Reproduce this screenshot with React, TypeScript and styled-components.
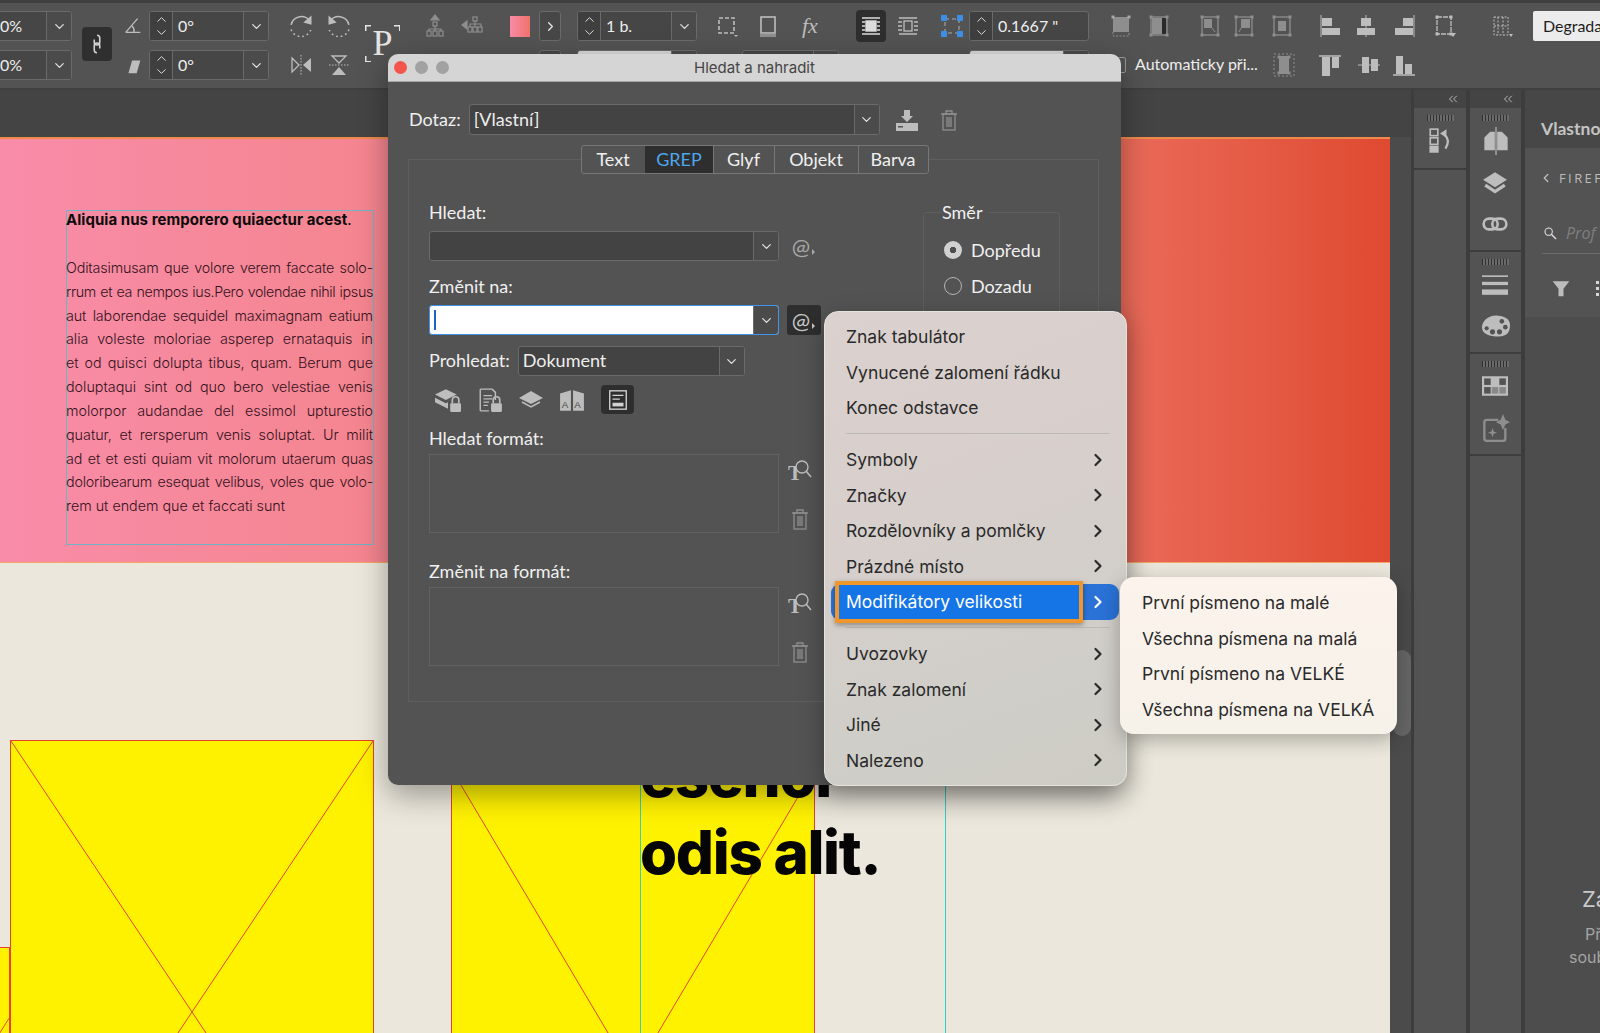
import React from "react"
import styled, { createGlobalStyle } from "styled-components"
import { ChevronDown, ChevronLeft, ChevronRight, ChevronUp, ChevronsLeft } from "lucide-react"

const ui = `"Lato", "Open Sans", sans-serif`
const mac = `"Inter", "Liberation Sans", sans-serif`

const GlobalStyle = createGlobalStyle`
    html, body { margin: 0; padding: 0; background: #4d4d4d; }
    * { box-sizing: border-box; }
    #root { width: 1600px; height: 1033px; }
`

const Screen = styled.div`
    position: relative;
    width: 1600px;
    height: 1033px;
    overflow: hidden;
    display: flex;
    flex-direction: column;
    font-family: ${ui};
    color: #e6e6e6;
`

/* top control bar */
const Toolbar = styled.div`
    flex: 0 0 90px;
    display: flex;
    align-items: flex-start;
    margin-left: -30px;
    width: 1630px;
    padding-top: 8px;
    background: #535353;
    border-top: 3px solid #3f3f3f;
    border-bottom: 2px solid #404040;
    font-size: 16px;
    overflow: hidden;
`
const Group = styled.div<{ $ml?: number }>`
    flex: none;
    margin-left: ${p => p.$ml ?? 0}px;
    display: flex;
    flex-direction: column;
    gap: 9px;
`
const ToolRow = styled.div<{ $gap?: number }>`
    display: flex;
    align-items: center;
    height: 30px;
    gap: ${p => p.$gap ?? 0}px;
`
const Slot = styled.div<{ $ml: number }>`
    flex: none;
    margin-left: ${p => p.$ml}px;
`
const Field = styled.div<{ $w: number; $h?: number; $ml?: number }>`
    flex: none;
    width: ${p => p.$w}px;
    height: ${p => p.$h ?? 30}px;
    margin-left: ${p => p.$ml ?? 0}px;
    display: flex;
    background: #464646;
    border: 1px solid #6a6a6a;
    border-radius: 3px;
    overflow: hidden;
`
const Stepper = styled.div`
    flex: 0 0 23px;
    display: flex;
    flex-direction: column;
    align-items: center;
    justify-content: center;
    background: #3f3f3f;
    border-right: 1px solid #6a6a6a;
    color: #dcdcdc;
    svg { margin: -1px 0; }
`
const FieldText = styled.div<{ $light?: boolean; $pad?: number }>`
    flex: 1;
    display: flex;
    align-items: center;
    padding: 0 0 2px ${p => p.$pad ?? 5}px;
    white-space: nowrap;
    background: ${p => (p.$light ? "#d8d8d8" : "transparent")};
    color: #eeeeee;
`
const Drop = styled.div<{ $w?: number }>`
    flex: 0 0 ${p => p.$w ?? 25}px;
    display: flex;
    align-items: center;
    justify-content: center;
    background: #4b4b4b;
    border-left: 1px solid #6a6a6a;
    color: #e2e2e2;
`
const LinkButton = styled.div`
    flex: 0 0 30px;
    height: 34px;
    margin: 16px 0 0 10px;
    display: flex;
    align-items: center;
    justify-content: center;
    background: #2f2f2f;
    border-radius: 4px;
`
const PFrame = styled.div`
    flex: 0 0 35px;
    height: 37px;
    margin: 14px 0 0 12px;
    font-family: "Liberation Serif", serif;
    font-size: 36px;
    line-height: 37px;
    text-align: center;
    color: #e4e4e4;
    background:
        linear-gradient(#e4e4e4, #e4e4e4) 0 0 / 6px 1.5px no-repeat,
        linear-gradient(#e4e4e4, #e4e4e4) 0 0 / 1.5px 6px no-repeat,
        linear-gradient(#e4e4e4, #e4e4e4) 100% 0 / 6px 1.5px no-repeat,
        linear-gradient(#e4e4e4, #e4e4e4) 100% 0 / 1.5px 6px no-repeat,
        linear-gradient(#e4e4e4, #e4e4e4) 0 100% / 6px 1.5px no-repeat,
        linear-gradient(#e4e4e4, #e4e4e4) 0 100% / 1.5px 6px no-repeat;
`
const Swatch = styled.div`
    flex: 0 0 20px;
    height: 21px;
    background: linear-gradient(90deg, #f78ca8, #f0726a);
`
const SquareButton = styled.div`
    flex: 0 0 22px;
    width: 22px;
    height: 30px;
    display: flex;
    align-items: center;
    justify-content: center;
    background: #474747;
    border: 1px solid #6a6a6a;
    border-radius: 3px;
    color: #e6e6e6;
`
const DarkTile = styled.div<{ $w?: number; $h?: number }>`
    flex: 0 0 ${p => p.$w ?? 30}px;
    width: ${p => p.$w ?? 30}px;
    height: ${p => p.$h ?? 32}px;
    display: flex;
    align-items: center;
    justify-content: center;
    background: #2e2e2e;
    border-radius: 4px;
`
const Check = styled.div`
    flex: 0 0 13px;
    height: 16px;
    margin-left: 4px;
    border: 1px solid #9a9a9a;
    border-radius: 2px;
`
const AutoLabel = styled.div`
    flex: 0 0 120px;
    margin: 0 14px 0 9px;
    padding-bottom: 3px;
    font-size: 16px;
    white-space: nowrap;
    color: #eeeeee;
`
const FxMark = styled.span`
    flex: 0 0 24px;
    display: block;
    padding-left: 5px;
    font-family: "Liberation Serif", serif;
    font-style: italic;
    font-size: 22px;
    line-height: 24px;
    color: #bdbdbd;
    white-space: nowrap;
`
const Degrade = styled.div`
    flex: 0 0 120px;
    height: 30px;
    margin-left: 20px;
    padding: 0 0 2px 10px;
    display: flex;
    align-items: center;
    background: #ececec;
    border-radius: 2px;
    color: #1e1e1e;
    white-space: nowrap;
`

/* icons */
const Svg = styled.svg<{ $size?: number }>`
    flex: 0 0 ${p => p.$size ?? 24}px;
    width: ${p => p.$size ?? 24}px;
    height: ${p => p.$size ?? 24}px;
    display: block;
`
const c = "#bdbdbd"
const m = "#8e8e8e"
const handles = (col: string, pts: number[][]) =>
    pts.map(([x, y], i) => <rect key={i} x={x - 1.5} y={y - 1.5} width="3" height="3" fill={col} />)

const shapes: Record<string, React.ReactNode> = {
    angle: <path d="M4 19 L17 4 M4 19 H20 M11 12 Q14 15 13 19" stroke={c} strokeWidth="1.4" fill="none" />,
    shear: <polygon points="7,21 11,7 20,7 16,21" fill={c} />,
    rotCw: <g fill="none" stroke={c} strokeWidth="1.3"><path d="M19 7 A9 9 0 0 0 3.5 11" /><path d="M3.5 15 A9 9 0 0 0 20.5 15" strokeDasharray="1.5 2.5" /><polygon points="21,3 21,11 14,9" fill={c} stroke="none" /></g>,
    rotCcw: <g fill="none" stroke={c} strokeWidth="1.3"><path d="M5 7 A9 9 0 0 1 20.5 11" /><path d="M20.5 15 A9 9 0 0 1 3.5 15" strokeDasharray="1.5 2.5" /><polygon points="3,3 3,11 10,9" fill={c} stroke="none" /></g>,
    flipH: <g><polygon points="3,5 10,12 3,19" fill="none" stroke={c} strokeWidth="1.3" /><polygon points="22,5 14,12 22,19" fill={c} /><path d="M12 2 V22" stroke={c} strokeDasharray="1.5 1.5" /></g>,
    flipV: <g><polygon points="5,3 19,3 12,10" fill="none" stroke={c} strokeWidth="1.3" /><polygon points="5,22 19,22 12,14" fill={c} /><path d="M2 12 H22" stroke={c} strokeDasharray="1.5 1.5" /></g>,
    orgUp: <g fill="none" stroke={m} strokeWidth="1.2"><polygon points="12,1 16,6 8,6" fill={m} /><rect x="10" y="8" width="4" height="4" /><path d="M12 12 V15 M6 17 V15 H18 V17 M12 15 V17" /><rect x="4" y="17" width="4" height="5" /><rect x="10" y="17" width="4" height="5" /><rect x="16" y="17" width="4" height="5" /></g>,
    orgLeft: <g fill="none" stroke={m} strokeWidth="1.2"><polygon points="1,11 6,7 6,15" fill={m} /><rect x="12" y="3" width="4" height="4" /><path d="M14 7 V10 M9 13 V10 H20 V13 M14 10 V13" /><rect x="7" y="13" width="4" height="5" /><rect x="12" y="13" width="4" height="5" /><rect x="17" y="13" width="4" height="5" /></g>,
    frame: <g><rect x="4" y="4" width="15" height="15" fill="none" stroke={c} strokeWidth="1.6" strokeDasharray="4 2" /><polygon points="19,21 23,21 21,23" fill={c} /></g>,
    shadow: <g><rect x="5" y="3" width="14" height="16" fill="none" stroke={c} strokeWidth="1.6" /><rect x="4" y="20" width="16" height="3" fill={m} /></g>,
    wrapOn: <g stroke="#dcdcdc" strokeWidth="1.4" fill="none"><path d="M3 4 H21 M3 20 H21 M3 8 H6 M18 8 H21 M3 12 H6 M18 12 H21 M3 16 H6 M18 16 H21" /><rect x="7" y="7" width="10" height="10" fill="#dcdcdc" /></g>,
    wrapOff: <g stroke={c} strokeWidth="1.3" fill="none"><path d="M3 4 H21 M3 20 H21 M2 8 H6 M18 8 H22 M2 12 H6 M18 12 H22 M2 16 H6 M18 16 H22" /><rect x="8" y="7" width="8" height="10" /></g>,
    handles: <g><path d="M5 5 H19 V19 H5 Z" fill="none" stroke={m} strokeWidth="1.6" strokeDasharray="4 3" />{[[4, 4], [20, 4], [4, 20], [20, 20]].map(([x, y], i) => <rect key={i} x={x - 3} y={y - 3} width="6" height="6" fill="#3d8fe6" />)}</g>,
    fitA: <g><rect x="4" y="3" width="16" height="15" fill="#8e8e8e" />{handles("#a8a8a8", [[4, 3], [20, 3]])}<path d="M4 18 V22 H20 V18" fill="none" stroke={m} strokeDasharray="2 1.5" /></g>,
    fitB: <g><rect x="4" y="3" width="16" height="18" fill="none" stroke={m} strokeWidth="1.3" /><rect x="5" y="4" width="10" height="16" fill="#8e8e8e" /><rect x="15" y="4" width="4" height="16" fill="#2a2a2a" />{handles(m, [[4, 3], [20, 3], [4, 21], [20, 21]])}</g>,
    fitC: <g><rect x="4" y="3" width="16" height="18" fill="none" stroke={m} strokeWidth="1.3" /><rect x="6" y="5" width="8" height="9" fill={m} /><path d="M14 14 L17 18" stroke={m} />{handles(m, [[4, 3], [20, 3], [4, 21], [20, 21]])}</g>,
    fitD: <g><rect x="4" y="3" width="16" height="18" fill="none" stroke={m} strokeWidth="1.3" /><rect x="9" y="5" width="9" height="9" fill={m} /><path d="M9 14 L7 18" stroke={m} />{handles(m, [[4, 3], [20, 3], [4, 21], [20, 21]])}</g>,
    fitE: <g><rect x="4" y="3" width="16" height="18" fill="none" stroke={m} strokeWidth="1.3" /><rect x="8" y="7" width="8" height="10" fill={m} />{handles(m, [[4, 3], [20, 3], [4, 21], [20, 21]])}</g>,
    fitDash: <g><rect x="2" y="1" width="20" height="22" fill="none" stroke={m} strokeDasharray="2 2" /><rect x="7" y="3" width="10" height="18" fill={m} />{handles(m, [[7, 4], [17, 4], [7, 20], [17, 20]])}</g>,
    alignL: <g fill={c}><path d="M3 1 V23" stroke={c} /><rect x="4" y="4" width="10" height="8" /><rect x="4" y="14" width="18" height="7" /></g>,
    alignC: <g fill={c}><path d="M12 1 V23" stroke={c} /><rect x="7" y="4" width="10" height="8" /><rect x="3" y="14" width="18" height="7" /></g>,
    alignR: <g fill={c}><path d="M21 1 V23" stroke={c} /><rect x="10" y="4" width="10" height="8" /><rect x="2" y="14" width="18" height="7" /></g>,
    alignTo: <g><rect x="5" y="3" width="14" height="17" fill="none" stroke={c} strokeWidth="1.3" strokeDasharray="5 1" /><polygon points="18,19 24,19 21,23" fill={c} />{handles(c, [[5, 3], [19, 3], [5, 20], [19, 20]])}</g>,
    grid: <g fill="none" stroke={c}><rect x="5" y="3" width="14" height="18" strokeDasharray="2 1.5" /><path d="M9 3 V21 M14 3 V21 M5 12 H19" strokeDasharray="2 1.5" /><polygon points="20,20 24,20 22,23" fill={c} stroke="none" /></g>,
    alignT: <g fill={c}><path d="M1 3 H23" stroke={c} strokeWidth="1.5" /><rect x="4" y="4" width="8" height="19" /><rect x="14" y="4" width="7" height="11" /></g>,
    alignM: <g fill={c}><path d="M1 12 H23" stroke={c} /><rect x="5" y="4" width="7" height="16" /><rect x="14" y="6" width="7" height="12" /></g>,
    alignB: <g fill={c}><path d="M1 22 H23" stroke={c} strokeWidth="1.5" /><rect x="4" y="3" width="7" height="18" /><rect x="13" y="11" width="7" height="10" /></g>,
    link: <g fill="none" stroke="#d4d4d4" strokeWidth="1.7"><path d="M12 2.5 a3 3 0 0 1 3 3 V10 a3 3 0 0 1 -6 0 V7" /><path d="M12 21.5 a3 3 0 0 1 -3 -3 V14 a3 3 0 0 1 6 0 V17" /></g>,
    import: <g fill={c}><polygon points="9,2 15,2 15,8 18,8 12,14 6,8 9,8" /><rect x="1" y="15" width="22" height="8" /><rect x="3" y="18" width="5" height="1.5" fill="#535353" /></g>,
    trash: <g fill="none" stroke={m} strokeWidth="1.3"><path d="M4 6 H20 M9 6 V3 H15 V6" /><rect x="6" y="6" width="12" height="16" /><path d="M10 9 V19 M12 9 V19 M14 9 V19" /></g>,
    typeSearch: <g><text x="0" y="21" fontFamily="Liberation Serif, serif" fontSize="21" fontWeight="700" fill={c}>T</text><circle cx="14" cy="8" r="6" fill="#535353" stroke={c} strokeWidth="1.4" /><path d="M18 12 L23 18" stroke={c} strokeWidth="1.6" /></g>,
    lockLayers: <g fill={c}><polygon points="10,2 20,7 10,12 0,7" /><polygon points="0,10 10,15 12,14 12,20 0,14" /><rect x="14" y="15" width="10" height="8" rx="1" /><path d="M16 15 V12 a3 3 0 0 1 6 0 V15" fill="none" stroke={c} strokeWidth="1.5" /></g>,
    lockDoc: <g><path d="M3 2 H14 L17 5 V12 M11 22 H3 Z M3 2 V22" fill="none" stroke={c} strokeWidth="1.3" /><path d="M6 8 H14 M6 11 H14 M6 14 H11 M6 17 H10" stroke={c} strokeWidth="1.3" /><rect x="13" y="15" width="10" height="8" rx="1" fill={c} /><path d="M15 15 V12 a3 3 0 0 1 6 0 V15" fill="none" stroke={c} strokeWidth="1.5" /></g>,
    layers: <g><polygon points="12,3 24,10 12,16 0,10" fill={c} /><path d="M3 14 L12 19 L21 14" fill="none" stroke={c} strokeWidth="1.5" /></g>,
    book: <g><path d="M1 6 L11 3 V22 L1 22 Z" fill={c} /><path d="M23 6 L13 3 V22 L23 22 Z" fill={c} /><text x="2.5" y="19" fontFamily="Liberation Sans, sans-serif" fontSize="9" fill="#484848">A</text><text x="14" y="19" fontFamily="Liberation Sans, sans-serif" fontSize="9" fill="#484848">A</text></g>,
    docActive: <g><rect x="3" y="2" width="18" height="20" fill="none" stroke="#d2d2d2" strokeWidth="1.5" /><path d="M6 7 H18 M6 11 H14" stroke="#d2d2d2" strokeWidth="1.5" /><rect x="6" y="15" width="12" height="4" fill="#d2d2d2" /></g>,
    history: <g fill="none" stroke={c} strokeWidth="1.5"><rect x="3" y="2" width="7" height="6" /><rect x="3" y="10" width="7" height="6" /><rect x="3" y="18" width="7" height="5" fill={c} /><path d="M17 20 Q22 12 16 7" strokeWidth="2" /><polygon points="12,6 18,2 18,10" fill={c} stroke="none" /></g>,
    pages: <g fill={c}><polygon points="2,9 7,4 11,4 11,20 2,20" /><polygon points="22,9 17,4 13,4 13,20 22,20" /><path d="M12 0 V24" stroke={c} /></g>,
    stack: <g fill={c}><polygon points="12,2 23,9 12,16 1,9" /><path d="M3 14 L12 20 L21 14" fill="none" stroke={c} strokeWidth="3" /></g>,
    chain: <g fill="none" stroke={c} strokeWidth="2.4"><rect x="1.5" y="7" width="13" height="10" rx="5" /><rect x="9.5" y="7" width="13" height="10" rx="5" /></g>,
    lines: <g fill={c}><rect x="0" y="4" width="24" height="1.5" /><rect x="0" y="10" width="24" height="3" /><rect x="0" y="17" width="24" height="5" /></g>,
    palette: <g><path d="M12 3 C5 3 0 8 0 13 C0 19 7 21 14 21 C22 21 24 17 24 11 C24 6 19 3 12 3 Z" fill={c} /><g fill="#535353"><circle cx="17" cy="8" r="2" /><circle cx="20" cy="13" r="2" /><circle cx="15" cy="17" r="2.2" /><circle cx="9" cy="17" r="2.2" /><circle cx="4" cy="14" r="1.8" /></g></g>,
    swatches: <g><rect x="0" y="3" width="24" height="18" fill={c} /><g fill="#535353"><rect x="2" y="5" width="6" height="6" /><rect x="16" y="5" width="6" height="6" /><rect x="2" y="13" width="6" height="6" /><rect x="9" y="13" width="6" height="6" fill="#888" /><rect x="16" y="13" width="6" height="6" fill="#888" /></g></g>,
    sparkle: <g><path d="M14 5 H4 a2 2 0 0 0 -2 2 V21 a2 2 0 0 0 2 2 H18 a2 2 0 0 0 2 -2 V12" fill="none" stroke={m} strokeWidth="2" /><polygon points="18,0 20,5 24,7 20,9 18,14 16,9 12,7 16,5" fill={m} /><polygon points="9,12 10,15 13,16 10,17 9,20 8,17 5,16 8,15" fill={m} /></g>,
    search: <g fill="none" stroke="#e2e2e2" strokeWidth="1.6"><circle cx="10" cy="10" r="5.5" /><path d="M14 14 L21 21" strokeWidth="2" /></g>,
    filter: <polygon points="2,4 22,4 15,13 15,22 9,22 9,13" fill={c} />,
}

const Icon: React.FC<{ name: string; size?: number }> = ({ name, size }) => (
    <Svg $size={size} viewBox="0 0 24 24">{shapes[name]}</Svg>
)

/* canvas */
const Workspace = styled.div`
    flex: 1;
    display: flex;
    min-height: 0;
`
const Canvas = styled.div`
    flex: 0 0 1411px;
    display: flex;
    flex-direction: column;
    background: #4b4b4b;
`
const CanvasStrip = styled.div`
    flex: 0 0 47px;
    background: #444444;
`
const CanvasRow = styled.div`
    flex: 1;
    display: flex;
`
const Page = styled.div`
    position: relative;
    flex: 0 0 1390px;
    background: #ebe7dc;
    border-top: 2px solid #ef8a4a;
    overflow: hidden;
`
const Banner = styled.div`
    height: 424px;
    background: linear-gradient(90deg, #f98ca9 0%, #f4858f 27%, #ea6c5b 80%, #df4a30 100%);
    border-bottom: 1px solid #f4a862;
`
const TextFrame = styled.div`
    position: absolute;
    left: 66px;
    top: 71px;
    width: 308px;
    height: 335px;
    border: 1px solid #6fb3c4;
    font-family: "Inter", sans-serif;
    font-weight: 300;
    font-size: 14.3px;
    line-height: 23.85px;
    color: #35121c;
`
const FrameTitle = styled.div`
    margin: -3px 0 24px -1px;
    font-weight: 700;
    font-size: 15px;
    letter-spacing: 0.05px;
    color: #0d0a0b;
    white-space: nowrap;
`
const TitleDot = styled.span`
    font-weight: 400;
`
const Line = styled.div<{ $last?: boolean; $ls?: number }>`
    width: 307px;
    margin-left: -1px;
    white-space: nowrap;
    text-align: justify;
    text-align-last: ${p => (p.$last ? "left" : "justify")};
    letter-spacing: ${p => p.$ls ?? 0}px;
`
const Placeholder = styled.div<{ $x: number; $y: number; $w: number; $h: number }>`
    position: absolute;
    left: ${p => p.$x}px;
    top: ${p => p.$y}px;
    width: ${p => p.$w}px;
    height: ${p => p.$h}px;
    background: #fff200;
    border: 1px solid #e6432a;
`
const Cross = styled.svg`
    display: block;
    width: 100%;
    height: 100%;
`
const Guide = styled.div<{ $x: number }>`
    position: absolute;
    left: ${p => p.$x}px;
    top: 606px;
    bottom: 0;
    width: 1px;
    background: #35cfc0;
`
const Headline = styled.div`
    position: absolute;
    left: 640px;
    top: 598px;
    font-family: "Inter", sans-serif;
    font-weight: 800;
    font-size: 60px;
    line-height: 77px;
    letter-spacing: -1.3px;
    color: #050505;
`
const ScrollGutter = styled.div`
    flex: 1;
    padding: 513px 0 0 3px;
`
const ScrollThumb = styled.div`
    width: 18px;
    height: 86px;
    background: #666666;
    border-radius: 9px;
`

/* right dock */
const Dock = styled.div`
    flex: 1;
    display: flex;
    background: #3d3d3d;
    padding-left: 3px;
    gap: 4px;
`
const DockColumn = styled.div<{ $w: number }>`
    flex: 0 0 ${p => p.$w}px;
    display: flex;
    flex-direction: column;
    background: #535353;
`
const Collapse = styled.div`
    flex: 0 0 18px;
    display: flex;
    align-items: center;
    justify-content: flex-end;
    padding-right: 6px;
    background: #444444;
    color: #c8c8c8;
`
const DockGroup = styled.div<{ $h: number }>`
    flex: 0 0 ${p => p.$h}px;
    display: flex;
    flex-direction: column;
    align-items: center;
    padding-top: 7px;
    background: #535353;
    border-bottom: 2px solid #3d3d3d;
`
const Gripper = styled.div`
    flex: 0 0 6px;
    width: 27px;
    margin-bottom: 6px;
    background: repeating-linear-gradient(90deg, #2f2f2f 0 1px, #6a6a6a 1px 3px);
`
const DockIcons = styled.div`
    display: flex;
    flex-direction: column;
    gap: 15px;
`
const PropsPanel = styled.div`
    flex: 1;
    display: flex;
    flex-direction: column;
    background: #4d4d4d;
    overflow: hidden;
    min-width: 0;
`
const PanelHead = styled.div`
    flex: 0 0 58px;
    padding: 18px 0 0 16px;
    display: flex;
    align-items: center;
    background: #474747;
    font-size: 17.5px;
    font-weight: 700;
    color: #c4c4c4;
    white-space: nowrap;
`
const PanelSection = styled.div`
    flex: 0 0 169px;
    display: flex;
    flex-direction: column;
    padding: 21px 0 0 14px;
    background: #535353;
`
const CrumbRow = styled.div`
    display: flex;
    align-items: center;
    gap: 6px;
    font-family: "Open Sans", sans-serif;
    font-size: 13px;
    letter-spacing: 2.4px;
    color: #bdbdbd;
    white-space: nowrap;
`
const SearchRow = styled.div`
    display: flex;
    align-items: center;
    gap: 8px;
    margin: 35px 0 0 3px;
    padding-bottom: 9px;
    font-family: "Open Sans", sans-serif;
    font-style: italic;
    font-size: 16px;
    color: #7f7f7f;
`
const PanelRule = styled.div`
    height: 1px;
    margin-left: 3px;
    background: #6c6c6c;
`
const FilterRow = styled.div`
    display: flex;
    align-items: center;
    margin: 24px 0 0 12px;
    gap: 25px;
`
const DotsV = styled.div`
    flex: 0 0 3px;
    height: 15px;
    background: repeating-linear-gradient(#d8d8d8 0 3px, transparent 3px 6px);
`
const EmptyState = styled.div`
    flex: 1;
    padding-top: 569px;
    font-family: "Inter", sans-serif;
    white-space: nowrap;
`
const EmptyHead = styled.div`
    margin: 0 0 11px 57px;
    font-size: 22px;
    line-height: 26px;
    color: #c9c9c9;
`
const EmptyLine = styled.div<{ $ml: number }>`
    margin-left: ${p => p.$ml}px;
    font-size: 16px;
    line-height: 23px;
    color: #a4a4a4;
`

/* find/replace dialog */
const Dialog = styled.div`
    position: absolute;
    left: 388px;
    top: 54px;
    width: 733px;
    height: 731px;
    display: flex;
    flex-direction: column;
    background: #535353;
    border-radius: 10px;
    box-shadow: 0 10px 30px rgba(0, 0, 0, 0.35);
    font-size: 18px;
`
const TitleBar = styled.div`
    position: relative;
    flex: 0 0 28px;
    display: flex;
    align-items: center;
    justify-content: center;
    background: #d5d5d5;
    border-radius: 10px 10px 0 0;
    border-bottom: 1px solid #a6a6a6;
    font-family: ${mac};
    font-size: 15px;
    color: #454545;
`
const Lights = styled.div`
    position: absolute;
    left: 6px;
    top: 7px;
    display: flex;
    gap: 8px;
`
const Light = styled.span<{ $c: string }>`
    width: 13px;
    height: 13px;
    border-radius: 50%;
    background: ${p => p.$c};
`
const QueryRow = styled.div`
    display: flex;
    align-items: center;
    height: 31px;
    margin: 22px 0 0 21px;
`
const DLabel = styled.div<{ $top?: number }>`
    height: 20px;
    line-height: 19px;
    margin-top: ${p => p.$top ?? 0}px;
    color: #f0f0f0;
    white-space: nowrap;
`
const Tabs = styled.div`
    position: relative;
    z-index: 1;
    align-self: center;
    display: flex;
    height: 29px;
    margin-top: 10px;
    background: #535353;
    border: 1px solid #777777;
    border-radius: 3px;
`
const Tab = styled.div<{ $w: number; $active?: boolean }>`
    flex: 0 0 ${p => p.$w}px;
    display: flex;
    align-items: center;
    justify-content: center;
    padding-bottom: 2px;
    border-left: 1px solid ${p => (p.$active ? "#2e2e2e" : "#777777")};
    background: ${p => (p.$active ? "#2e2e2e" : "transparent")};
    color: ${p => (p.$active ? "#4ea6ea" : "#f0f0f0")};
    &:first-child { border-left: none; }
`
const Panel = styled.div`
    display: flex;
    width: 691px;
    height: 543px;
    margin: -15px 0 0 20px;
    padding-left: 20px;
    border: 1px solid #5e5e5e;
`
const LeftColumn = styled.div`
    flex: 0 0 393px;
    padding-top: 43px;
`
const FieldRow = styled.div<{ $top: number }>`
    display: flex;
    align-items: center;
    margin-top: ${p => p.$top}px;
`
const DialogField = styled(Field)<{ $focus?: boolean }>`
    background: ${p => (p.$focus ? "#ffffff" : "#434343")};
    border-color: ${p => (p.$focus ? "#3f93e8" : "#6a6a6a")};
`
const Caret = styled.span`
    width: 2px;
    height: 20px;
    align-self: center;
    margin-left: 4px;
    background: #1c64c8;
`
const AtButton = styled.div<{ $on?: boolean }>`
    position: relative;
    flex: 0 0 34px;
    height: 30px;
    margin-left: 8px;
    display: flex;
    align-items: center;
    justify-content: center;
    padding-right: 6px;
    border-radius: 3px;
    font-size: 22px;
    background: ${p => (p.$on ? "#2e2e2e" : "transparent")};
    color: ${p => (p.$on ? "#c8c8c8" : "#a8a8a8")};
    &::after {
        content: "";
        position: absolute;
        right: 6px;
        bottom: 6px;
        border-left: 3px solid currentColor;
        border-top: 3px solid transparent;
        border-bottom: 3px solid transparent;
    }
`
const ScopeIcons = styled.div`
    display: flex;
    align-items: center;
    height: 29px;
    margin-top: 9px;
    padding-left: 6px;
    gap: 16px;
`
const FormatRow = styled.div`
    display: flex;
    margin-top: 5px;
`
const FormatBox = styled.div`
    flex: 0 0 350px;
    height: 79px;
    border: 1px solid #626262;
`
const FormatTools = styled.div`
    margin-left: 9px;
    padding-top: 5px;
    display: flex;
    flex-direction: column;
    gap: 24px;
`
const Direction = styled.div`
    flex: 0 0 137px;
    height: 125px;
    margin: 52px 0 0 101px;
    padding-left: 18px;
    border: 1px solid #5e5e5e;
    border-radius: 3px;
`
const Legend = styled.div`
    width: fit-content;
    margin-top: -10px;
    padding-right: 6px;
    height: 20px;
    line-height: 19px;
    background: #535353;
    color: #f0f0f0;
`
const RadioRow = styled.div<{ $top: number }>`
    display: flex;
    align-items: center;
    gap: 9px;
    height: 20px;
    margin: ${p => p.$top}px 0 0 2px;
    color: #f0f0f0;
`
const Radio = styled.span<{ $on?: boolean }>`
    width: 18px;
    height: 18px;
    border-radius: 50%;
    ${p => (p.$on
        ? "background: radial-gradient(circle, #4d4d4d 0 3px, #d0d0d0 3.5px);"
        : "border: 1.5px solid #b4b4b4;")}
`

/* context menu */
const Menu = styled.div`
    position: absolute;
    left: 824px;
    top: 311px;
    width: 303px;
    height: 475px;
    padding-top: 7px;
    border-radius: 14px;
    background: linear-gradient(160deg, #dbd1cf 0%, #d7cfcc 40%, #d0cec9 75%, #cdccc4 100%);
    border: 1px solid #e6e3de;
    box-shadow: 0 8px 24px rgba(0, 0, 0, 0.3);
    font-family: ${mac};
    font-size: 17.5px;
    color: #2a2a2a;
`
const MenuItem = styled.div`
    height: 35.6px;
    display: flex;
    align-items: center;
    justify-content: space-between;
    padding: 0 18px 0 21px;
    white-space: nowrap;
`
const MenuSep = styled.div<{ $top: number }>`
    height: 1px;
    margin: ${p => p.$top}px 16px 8px 21px;
    background: #bdb9b5;
`
const ActiveItem = styled(MenuItem)`
    margin: 0 7px 0 6px;
    padding: 0 11px 0 0;
    border-radius: 9px;
    background: #2a72d6;
    color: #ffffff;
`
const Callout = styled.div`
    flex: 0 0 248px;
    height: 42px;
    margin: -3px 0 -3px 4px;
    padding-left: 7px;
    display: flex;
    align-items: center;
    background: #1574e6;
    border: 4px solid #f0962a;
    box-shadow: 0 2px 5px rgba(0, 0, 0, 0.35);
`
const SubMenu = styled.div`
    position: absolute;
    left: 1120px;
    top: 577px;
    width: 277px;
    height: 157px;
    padding: 8px 0;
    border-radius: 14px;
    background: linear-gradient(180deg, #fbf3ec, #f6f1e9);
    box-shadow: 0 6px 20px rgba(0, 0, 0, 0.28);
    font-family: ${mac};
    font-size: 17.5px;
    color: #2a2a2a;
`
const SubItem = styled(MenuItem)`
    padding-left: 22px;
`

const bodyLines: { text: string; ls?: number }[] = [
    { text: "Oditasimusam que volore verem faccate solo-", ls: -0.15 },
    { text: "rrum et ea nempos ius.Pero volendae nihil ipsus", ls: -0.35 },
    { text: "aut laborendae sequidel maximagnam eatium", ls: -0.1 },
    { text: "alia voleste moloriae asperep ernataquis in" },
    { text: "et od quisci dolupta tibus, quam. Berum que" },
    { text: "doluptaqui sint od quo bero velestiae venis" },
    { text: "molorpor audandae del essimol upturestio" },
    { text: "quatur, et rersperum venis soluptat. Ur milit" },
    { text: "ad et et esti quiam vit molorum utaerum quas", ls: -0.1 },
    { text: "doloribearum esequat velibus, voles que volo-", ls: -0.2 },
]
const menuTop = ["Znak tabulátor", "Vynucené zalomení řádku", "Konec odstavce"]
const menuMid = ["Symboly", "Značky", "Rozdělovníky a pomlčky", "Prázdné místo"]
const menuEnd = ["Uvozovky", "Znak zalomení", "Jiné", "Nalezeno"]
const subItems = ["První písmeno na malé", "Všechna písmena na malá", "První písmeno na VELKÉ", "Všechna písmena na VELKÁ"]

const Down = () => <ChevronDown size={15} strokeWidth={2} />
const Spin = () => (
    <Stepper>
        <ChevronUp size={15} strokeWidth={1.6} />
        <ChevronDown size={15} strokeWidth={1.6} />
    </Stepper>
)
const Arrow = () => <ChevronRight size={20} strokeWidth={2.6} />

const App: React.FC = () => {
    return (
        <Screen>
            <GlobalStyle />
            <Toolbar>
                <Group>
                    <Field $w={102}><FieldText $pad={29}>0%</FieldText><Drop><Down /></Drop></Field>
                    <Field $w={102}><FieldText $pad={29}>0%</FieldText><Drop><Down /></Drop></Field>
                </Group>
                <LinkButton><Icon name="link" size={22} /></LinkButton>
                <Group $ml={10}>
                    <ToolRow $gap={5}><Icon name="angle" size={22} /><Field $w={120}><Spin /><FieldText>0°</FieldText><Drop><Down /></Drop></Field></ToolRow>
                    <ToolRow $gap={5}><Icon name="shear" size={22} /><Field $w={120}><Spin /><FieldText>0°</FieldText><Drop><Down /></Drop></Field></ToolRow>
                </Group>
                <Group $ml={18}>
                    <ToolRow $gap={10}><Icon name="rotCw" size={28} /><Icon name="rotCcw" size={28} /></ToolRow>
                    <ToolRow $gap={12}><Slot $ml={2}><Icon name="flipH" /></Slot><Slot $ml={2}><Icon name="flipV" /></Slot></ToolRow>
                </Group>
                <PFrame>P</PFrame>
                <Group $ml={23}>
                    <ToolRow $gap={14}><Icon name="orgUp" /><Icon name="orgLeft" /></ToolRow>
                </Group>
                <Group $ml={25}>
                    <ToolRow $gap={9}><Swatch /><SquareButton><ChevronRight size={15} /></SquareButton></ToolRow>
                    <ToolRow><Slot $ml={29}><SquareButton /></Slot></ToolRow>
                </Group>
                <Group $ml={16}>
                    <Field $w={120}><Spin /><FieldText>1 b.</FieldText><Drop><Down /></Drop></Field>
                    <Field $w={120}><FieldText $light /><Drop /></Field>
                </Group>
                <Group $ml={18}>
                    <ToolRow $gap={17}><Icon name="frame" /><Icon name="shadow" /><FxMark>fx</FxMark></ToolRow>
                    <ToolRow><Field $w={97} $ml={27}><FieldText /><Drop /></Field></ToolRow>
                </Group>
                <Group $ml={17}>
                    <ToolRow $gap={10}><DarkTile><Icon name="wrapOn" /></DarkTile><Icon name="wrapOff" /></ToolRow>
                </Group>
                <Group $ml={20}>
                    <ToolRow><Icon name="handles" /></ToolRow>
                </Group>
                <Group $ml={5}>
                    <Field $w={120}><Spin /><FieldText>0.1667 "</FieldText></Field>
                    <Field $w={120}><FieldText $light /><Drop /></Field>
                </Group>
                <Group $ml={20}>
                    <ToolRow>
                        <Icon name="fitA" /><Slot $ml={14}><Icon name="fitB" /></Slot><Slot $ml={27}><Icon name="fitC" /></Slot><Slot $ml={10}><Icon name="fitD" /></Slot><Slot $ml={14}><Icon name="fitE" /></Slot>
                    </ToolRow>
                    <ToolRow>
                        <Check /><AutoLabel>Automaticky při...</AutoLabel><Icon name="fitDash" />
                    </ToolRow>
                </Group>
                <Group $ml={22}>
                    <ToolRow>
                        <Icon name="alignL" /><Slot $ml={12}><Icon name="alignC" /></Slot><Slot $ml={15}><Icon name="alignR" /></Slot><Slot $ml={15}><Icon name="alignTo" /></Slot>
                    </ToolRow>
                    <ToolRow>
                        <Icon name="alignT" /><Slot $ml={15}><Icon name="alignM" /></Slot><Slot $ml={11}><Icon name="alignB" /></Slot>
                    </ToolRow>
                </Group>
                <Group $ml={33}>
                    <ToolRow><Icon name="grid" /></ToolRow>
                </Group>
                <Degrade>Degradace</Degrade>
            </Toolbar>

            <Workspace>
                <Canvas>
                    <CanvasStrip />
                    <CanvasRow>
                        <Page>
                            <Banner />
                            <TextFrame>
                                <FrameTitle>Aliquia nus remporero quiaectur acest<TitleDot>.</TitleDot></FrameTitle>
                                {bodyLines.map(l => <Line key={l.text} $ls={l.ls}>{l.text}</Line>)}
                                <Line $last>rem ut endem que et faccati sunt</Line>
                            </TextFrame>
                            <Placeholder $x={-10} $y={808} $w={20} $h={200}>
                                <Cross viewBox="0 0 20 200" preserveAspectRatio="none"><path d="M20 71 L0 100" stroke="#e6432a" fill="none" /></Cross>
                            </Placeholder>
                            <Placeholder $x={10} $y={601} $w={364} $h={544}>
                                <Cross viewBox="0 0 364 544" preserveAspectRatio="none"><path d="M0 0 L364 544 M364 0 L0 544" stroke="#e6432a" fill="none" /></Cross>
                            </Placeholder>
                            <Placeholder $x={451} $y={630} $w={364} $h={612}>
                                <Cross viewBox="0 0 364 612" preserveAspectRatio="none"><path d="M0 0 L364 612 M364 0 L0 612" stroke="#e6432a" fill="none" /></Cross>
                            </Placeholder>
                            <Guide $x={640} />
                            <Guide $x={945} />
                            <Headline>esenor<br />odis alit.</Headline>
                        </Page>
                        <ScrollGutter><ScrollThumb /></ScrollGutter>
                    </CanvasRow>
                </Canvas>
                <Dock>
                    <DockColumn $w={52}>
                        <Collapse><ChevronsLeft size={14} strokeWidth={1.5} /></Collapse>
                        <DockGroup $h={62}><Gripper /><Icon name="history" size={26} /></DockGroup>
                    </DockColumn>
                    <DockColumn $w={51}>
                        <Collapse><ChevronsLeft size={14} strokeWidth={1.5} /></Collapse>
                        <DockGroup $h={144}><Gripper /><DockIcons><Icon name="pages" size={28} /><Icon name="stack" size={26} /><Icon name="chain" size={26} /></DockIcons></DockGroup>
                        <DockGroup $h={102}><Gripper /><DockIcons><Icon name="lines" size={26} /><Icon name="palette" size={28} /></DockIcons></DockGroup>
                        <DockGroup $h={102}><Gripper /><DockIcons><Icon name="swatches" size={26} /><Icon name="sparkle" size={28} /></DockIcons></DockGroup>
                    </DockColumn>
                    <PropsPanel>
                        <PanelHead>Vlastnosti</PanelHead>
                        <PanelSection>
                            <CrumbRow><ChevronLeft size={14} strokeWidth={2.4} />FIREFLY</CrumbRow>
                            <SearchRow><Icon name="search" size={16} />Prof</SearchRow>
                            <PanelRule />
                            <FilterRow><Icon name="filter" size={20} /><DotsV /></FilterRow>
                        </PanelSection>
                        <EmptyState>
                            <EmptyHead>Za</EmptyHead>
                            <EmptyLine $ml={60}>Př</EmptyLine>
                            <EmptyLine $ml={44}>soub</EmptyLine>
                        </EmptyState>
                    </PropsPanel>
                </Dock>
            </Workspace>

            <Dialog>
                <TitleBar>
                    <Lights><Light $c="#f4544c" /><Light $c="#a2a2a2" /><Light $c="#a2a2a2" /></Lights>
                    Hledat a nahradit
                </TitleBar>
                <QueryRow>
                    <DLabel>Dotaz:</DLabel>
                    <DialogField $w={411} $h={31} $ml={8}>
                        <FieldText $pad={4}>[Vlastní]</FieldText>
                        <Drop><Down /></Drop>
                    </DialogField>
                    <Slot $ml={15}><Icon name="import" /></Slot>
                    <Slot $ml={18}><Icon name="trash" /></Slot>
                </QueryRow>
                <Tabs>
                    <Tab $w={63}>Text</Tab>
                    <Tab $w={68} $active>GREP</Tab>
                    <Tab $w={61}>Glyf</Tab>
                    <Tab $w={84}>Objekt</Tab>
                    <Tab $w={70}>Barva</Tab>
                </Tabs>
                <Panel>
                    <LeftColumn>
                        <DLabel>Hledat:</DLabel>
                        <FieldRow $top={8}>
                            <DialogField $w={350}><FieldText /><Drop><Down /></Drop></DialogField>
                            <AtButton>@</AtButton>
                        </FieldRow>
                        <DLabel $top={16}>Změnit na:</DLabel>
                        <FieldRow $top={8}>
                            <DialogField $w={350} $focus><Caret /><FieldText /><Drop><Down /></Drop></DialogField>
                            <AtButton $on>@</AtButton>
                        </FieldRow>
                        <FieldRow $top={11}>
                            <DLabel>Prohledat:</DLabel>
                            <DialogField $w={227} $ml={8}>
                                <FieldText $pad={4}>Dokument</FieldText>
                                <Drop><Down /></Drop>
                            </DialogField>
                        </FieldRow>
                        <ScopeIcons>
                            <Icon name="lockLayers" size={26} /><Icon name="lockDoc" size={26} /><Icon name="layers" /><Icon name="book" size={26} />
                            <DarkTile $w={33} $h={29}><Icon name="docActive" size={22} /></DarkTile>
                        </ScopeIcons>
                        <DLabel $top={15}>Hledat formát:</DLabel>
                        <FormatRow>
                            <FormatBox />
                            <FormatTools><Icon name="typeSearch" /><Icon name="trash" /></FormatTools>
                        </FormatRow>
                        <DLabel $top={29}>Změnit na formát:</DLabel>
                        <FormatRow>
                            <FormatBox />
                            <FormatTools><Icon name="typeSearch" /><Icon name="trash" /></FormatTools>
                        </FormatRow>
                    </LeftColumn>
                    <Direction>
                        <Legend>Směr</Legend>
                        <RadioRow $top={17}><Radio $on />Dopředu</RadioRow>
                        <RadioRow $top={16}><Radio />Dozadu</RadioRow>
                    </Direction>
                </Panel>
            </Dialog>

            <Menu>
                {menuTop.map(t => <MenuItem key={t}>{t}</MenuItem>)}
                <MenuSep $top={7} />
                {menuMid.map(t => <MenuItem key={t}>{t}<Arrow /></MenuItem>)}
                <ActiveItem><Callout>Modifikátory velikosti</Callout><Arrow /></ActiveItem>
                <MenuSep $top={7} />
                {menuEnd.map(t => <MenuItem key={t}>{t}<Arrow /></MenuItem>)}
            </Menu>
            <SubMenu>
                {subItems.map(t => <SubItem key={t}>{t}</SubItem>)}
            </SubMenu>
        </Screen>
    )
}

export default App
